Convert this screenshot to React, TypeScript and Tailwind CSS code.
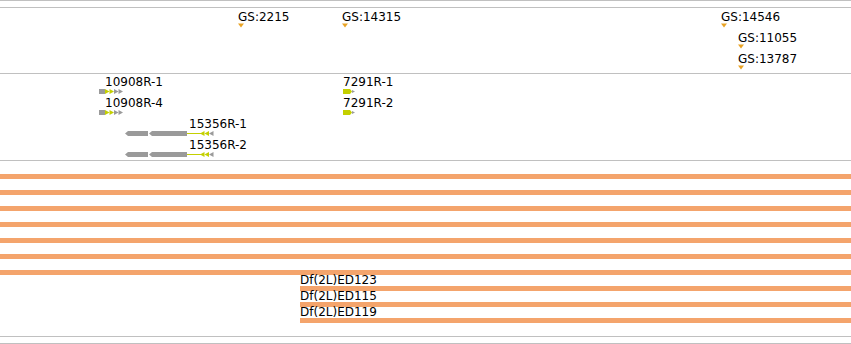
const GRAY = "#9a9a9a";
const LIME = "#c4d000";
const GOLD = "#e9a324";

type Marker = { label: string; x: number; row: number };

const MARKERS: Marker[] = [
  { label: "GS:2215", x: 238, row: 0 },
  { label: "GS:14315", x: 342, row: 0 },
  { label: "GS:14546", x: 721, row: 0 },
  { label: "GS:11055", x: 738, row: 1 },
  { label: "GS:13787", x: 738, row: 2 },
];

type Gene = { label: string; labelX: number; x: number; row: number; kind: "fwd" | "rev" | "short" };

const GENES: Gene[] = [
  { label: "10908R-1", labelX: 105, x: 99, row: 0, kind: "fwd" },
  { label: "10908R-4", labelX: 105, x: 99, row: 1, kind: "fwd" },
  { label: "15356R-1", labelX: 189, x: 125, row: 2, kind: "rev" },
  { label: "15356R-2", labelX: 189, x: 125, row: 3, kind: "rev" },
  { label: "7291R-1", labelX: 343, x: 343, row: 0, kind: "short" },
  { label: "7291R-2", labelX: 343, x: 343, row: 1, kind: "short" },
];

// deficiency rows: null = spans the whole view
const DEFICIENCIES: (string | null)[] = [
  null, null, null, null, null, null, null,
  "Df(2L)ED123", "Df(2L)ED115", "Df(2L)ED119",
];

function GeneGlyph({ kind }: { kind: Gene["kind"] }) {
  if (kind === "fwd") {
    return (
      <svg width="27" height="5" viewBox="0 0 27 5">
        <rect x="0" y="0" width="6" height="5" fill={GRAY} />
        <polygon points="6,0 10.5,2.5 6,5" fill={LIME} />
        <polygon points="10.5,0 15,2.5 10.5,5" fill={LIME} />
        <polygon points="15,0 19.5,2.5 15,5" fill={GRAY} />
        <polygon points="19.5,0 24,2.5 19.5,5" fill={GRAY} />
      </svg>
    );
  }
  if (kind === "rev") {
    return (
      <svg width="92" height="5" viewBox="0 0 92 5">
        <polygon points="0,2.5 3,0 23,0 23,5 3,5" fill={GRAY} />
        <polygon points="24,2.5 27,0 62,0 62,5 27,5" fill={GRAY} />
        <rect x="62" y="2" width="16" height="1" fill={LIME} />
        <polygon points="79.5,0 75,2.5 79.5,5" fill={LIME} />
        <polygon points="84,0 79.5,2.5 84,5" fill={LIME} />
        <polygon points="88.5,0 84,2.5 88.5,5" fill={GRAY} />
      </svg>
    );
  }
  return (
    <svg width="13" height="5" viewBox="0 0 13 5">
      <polygon points="0,0 7,0 9,2.5 7,5 0,5" fill={LIME} />
      <polygon points="9,1 12,2.5 9,4" fill={GRAY} />
    </svg>
  );
}

export default function App() {
  return (
    <div className="w-[851px] h-[344px] bg-white overflow-hidden font-['DejaVu_Sans',sans-serif] text-[12px] text-black">
      <div className="h-[8px] border-y border-[#c0c0c0]" />

      {/* GS insertion track */}
      <div className="relative h-[66px] border-b border-[#c0c0c0]">
        {MARKERS.map((m) => (
          <div key={m.label} className="absolute" style={{ left: m.x, top: 2 + m.row * 21 }}>
            <div className="h-[13px] leading-[13px] pt-[1px] whitespace-nowrap">{m.label}</div>
            <svg width="7" height="5" viewBox="0 0 7 5" className="block">
              <polygon points="0,0.5 6,0.5 3,4.5" fill={GOLD} />
            </svg>
          </div>
        ))}
      </div>

      {/* RNAi amplicon track */}
      <div className="relative h-[87px] border-b border-[#c0c0c0]">
        {GENES.map((g) => (
          <div key={g.label}>
            <div
              className="absolute h-[13px] leading-[13px] whitespace-nowrap"
              style={{ left: g.labelX, top: 2 + g.row * 21 }}
            >
              {g.label}
            </div>
            <div className="absolute flex" style={{ left: g.x, top: 15 + g.row * 21 }}>
              <GeneGlyph kind={g.kind} />
            </div>
          </div>
        ))}
      </div>

      {/* deficiency track */}
      <div className="h-[176px] border-b border-[#c0c0c0] pt-[2px] flex flex-col">
        {DEFICIENCIES.map((d, i) =>
          d ? (
            <div key={i} className="h-[16px] flex flex-col pl-[300px]">
              <div className="h-[11px] leading-[11px] whitespace-nowrap">{d}</div>
              <div className="h-[5px] bg-[#f4a46c]" />
            </div>
          ) : (
            <div key={i} className="h-[16px] flex flex-col justify-end">
              <div className="h-[5px] bg-[#f4a46c]" />
            </div>
          )
        )}
      </div>

      <div className="h-[7px] border-b border-[#c0c0c0]" />
    </div>
  );
}
